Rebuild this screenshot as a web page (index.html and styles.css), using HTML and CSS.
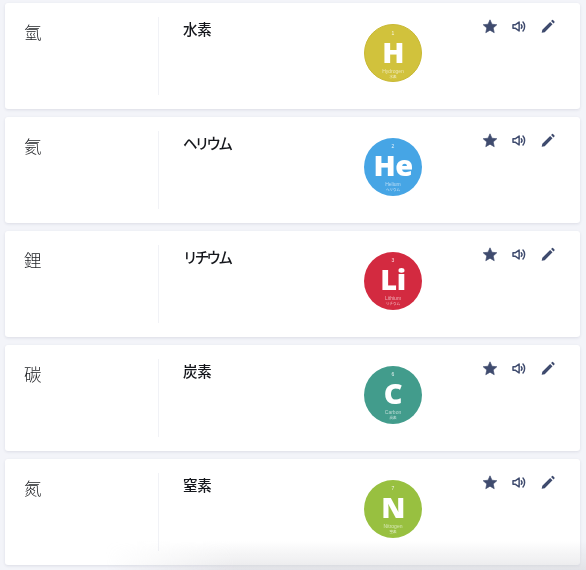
FILE: index.html
```html
<!DOCTYPE html>
<html lang="ja">
<head>
<meta charset="utf-8">
<title>元素</title>
<link rel="stylesheet" href="styles.css">
</head>
<body>
<svg class="defs" width="0" height="0" aria-hidden="true">
  <symbol id="i-star" viewBox="0 0 24 24"><path d="M12 2l2.95 6.6 7.3.75-5.45 4.8 1.55 7.1L12 17.6l-6.35 3.65 1.55-7.1-5.45-4.8 7.3-.75z" fill="currentColor" stroke="currentColor" stroke-width="1" stroke-linejoin="round"/></symbol>
  <symbol id="i-sound" viewBox="0 0 24 24"><path d="M3 9.3h3.8L12.2 5.2v13.6l-5.4-4.1H3z" fill="none" stroke="currentColor" stroke-width="2.2" stroke-linejoin="round"/><path d="M15.4 9.3c1.3 1.5 1.3 3.9 0 5.4M18 5.4c3.2 3.4 3.2 9.8 0 13.2" fill="none" stroke="currentColor" stroke-width="2.2" stroke-linecap="round"/></symbol>
  <symbol id="i-pen" viewBox="0 0 24 24"><path d="M2.5 21.5l1-4.6L15.2 5.2l3.6 3.6L7.1 20.5zM16.6 3.8l1.5-1.5a1 1 0 0 1 1.4 0l2.2 2.2a1 1 0 0 1 0 1.4l-1.5 1.5z" fill="currentColor"/></symbol>
</svg>
<main class="list">
  <article class="card">
    <div class="kanji">氫</div>
    <div class="name">水素</div>
    <div class="badge-col"><div class="badge hydrogen"><span class="num">1</span><span class="sym">H</span><span class="en">Hydrogen</span><span class="jp">水素</span></div></div>
    <div class="actions">
      <svg class="icon star"><use href="#i-star"/></svg><svg class="icon sound"><use href="#i-sound"/></svg><svg class="icon pen"><use href="#i-pen"/></svg>
    </div>
  </article>
  <article class="card">
    <div class="kanji">氦</div>
    <div class="name kana">ヘリウム</div>
    <div class="badge-col"><div class="badge helium"><span class="num">2</span><span class="sym">He</span><span class="en">Helium</span><span class="jp">ヘリウム</span></div></div>
    <div class="actions">
      <svg class="icon star"><use href="#i-star"/></svg><svg class="icon sound"><use href="#i-sound"/></svg><svg class="icon pen"><use href="#i-pen"/></svg>
    </div>
  </article>
  <article class="card">
    <div class="kanji">鋰</div>
    <div class="name kana">リチウム</div>
    <div class="badge-col"><div class="badge lithium"><span class="num">3</span><span class="sym">Li</span><span class="en">Lithium</span><span class="jp">リチウム</span></div></div>
    <div class="actions">
      <svg class="icon star"><use href="#i-star"/></svg><svg class="icon sound"><use href="#i-sound"/></svg><svg class="icon pen"><use href="#i-pen"/></svg>
    </div>
  </article>
  <article class="card">
    <div class="kanji">碳</div>
    <div class="name">炭素</div>
    <div class="badge-col"><div class="badge carbon"><span class="num">6</span><span class="sym">C</span><span class="en">Carbon</span><span class="jp">炭素</span></div></div>
    <div class="actions">
      <svg class="icon star"><use href="#i-star"/></svg><svg class="icon sound"><use href="#i-sound"/></svg><svg class="icon pen"><use href="#i-pen"/></svg>
    </div>
  </article>
  <article class="card last">
    <div class="kanji">氮</div>
    <div class="name">窒素</div>
    <div class="badge-col"><div class="badge nitrogen"><span class="num">7</span><span class="sym">N</span><span class="en">Nitrogen</span><span class="jp">窒素</span></div></div>
    <div class="actions">
      <svg class="icon star"><use href="#i-star"/></svg><svg class="icon sound"><use href="#i-sound"/></svg><svg class="icon pen"><use href="#i-pen"/></svg>
    </div>
  </article>
</main>
</body>
</html>
```
FILE: styles.css
```css
* { box-sizing: border-box; }
html, body { margin: 0; height: 100%; overflow: hidden; }
body {
  background: #f3f4f9;
  font-family: Inter, "Noto Sans CJK JP", sans-serif;
  color: #15171c;
}
.defs { position: absolute; }
.list {
  display: flex;
  flex-direction: column;
  gap: 8px;
  padding: 3px 6px 0 5px;
  filter: blur(.35px);
}
.card {
  position: relative;
  display: flex;
  height: 106px;
  background: #fff;
  border-radius: 3px;
  box-shadow: 0 1px 3px rgba(60, 66, 100, .12);
}
.kanji {
  width: 154px;
  height: 78px;
  margin-top: 14px;
  padding: 3px 0 0 19px;
  border-right: 1px solid #f1f2f6;
  font-family: "Noto Sans CJK TC", serif;
  font-weight: 300;
  font-size: 17.5px;
  line-height: 24px;
  color: #1c1e22;
}
.name {
  width: 180px;
  padding: 16px 0 0 24px;
  font-family: "Noto Sans CJK JP", sans-serif;
  font-weight: 500;
  font-size: 14.5px;
  line-height: 20px;
  letter-spacing: -.3px;
}
.kana { letter-spacing: -2.7px; }
.badge-col {
  padding: 21px 0 0 25px;
}
.badge {
  display: flex;
  flex-direction: column;
  align-items: center;
  width: 58px;
  height: 58px;
  border-radius: 50%;
  color: #fff;
  font-family: "Liberation Sans", Arial, sans-serif;
}
.num { margin-top: 5px; font-size: 5px; line-height: 6px; opacity: .85; }
.sym { margin-top: 5px; font-family: "Open Sans", sans-serif; font-weight: 800; font-size: 29px; line-height: 22px; letter-spacing: -.5px; }
.en { margin-top: 5px; font-size: 5px; line-height: 6px; opacity: .6; }
.jp { font-family: "Noto Sans CJK JP", sans-serif; font-size: 3.5px; line-height: 5px; opacity: .7; }
.hydrogen { background: #d1c23c; border: 1px solid #c9b934; }
.helium { background: #46a5e5; }
.lithium { background: #d32a40; }
.carbon { background: #429c8c; }
.nitrogen { background: #98c040; }
.actions {
  display: flex;
  align-items: flex-start;
  gap: 13px;
  margin-left: auto;
  padding: 15px 24px 0 0;
  color: #3f4b6e;
}
.icon { display: block; width: 16px; height: 17px; }
.last::after {
  content: "";
  position: absolute;
  left: 100px;
  right: -6px;
  top: 82px;
  height: 29px;
  background: linear-gradient(to bottom, rgba(205, 205, 210, 0), rgba(205, 205, 210, .45));
  -webkit-mask-image: linear-gradient(to right, transparent, #000 130px);
  mask-image: linear-gradient(to right, transparent, #000 130px);
  pointer-events: none;
}
```
